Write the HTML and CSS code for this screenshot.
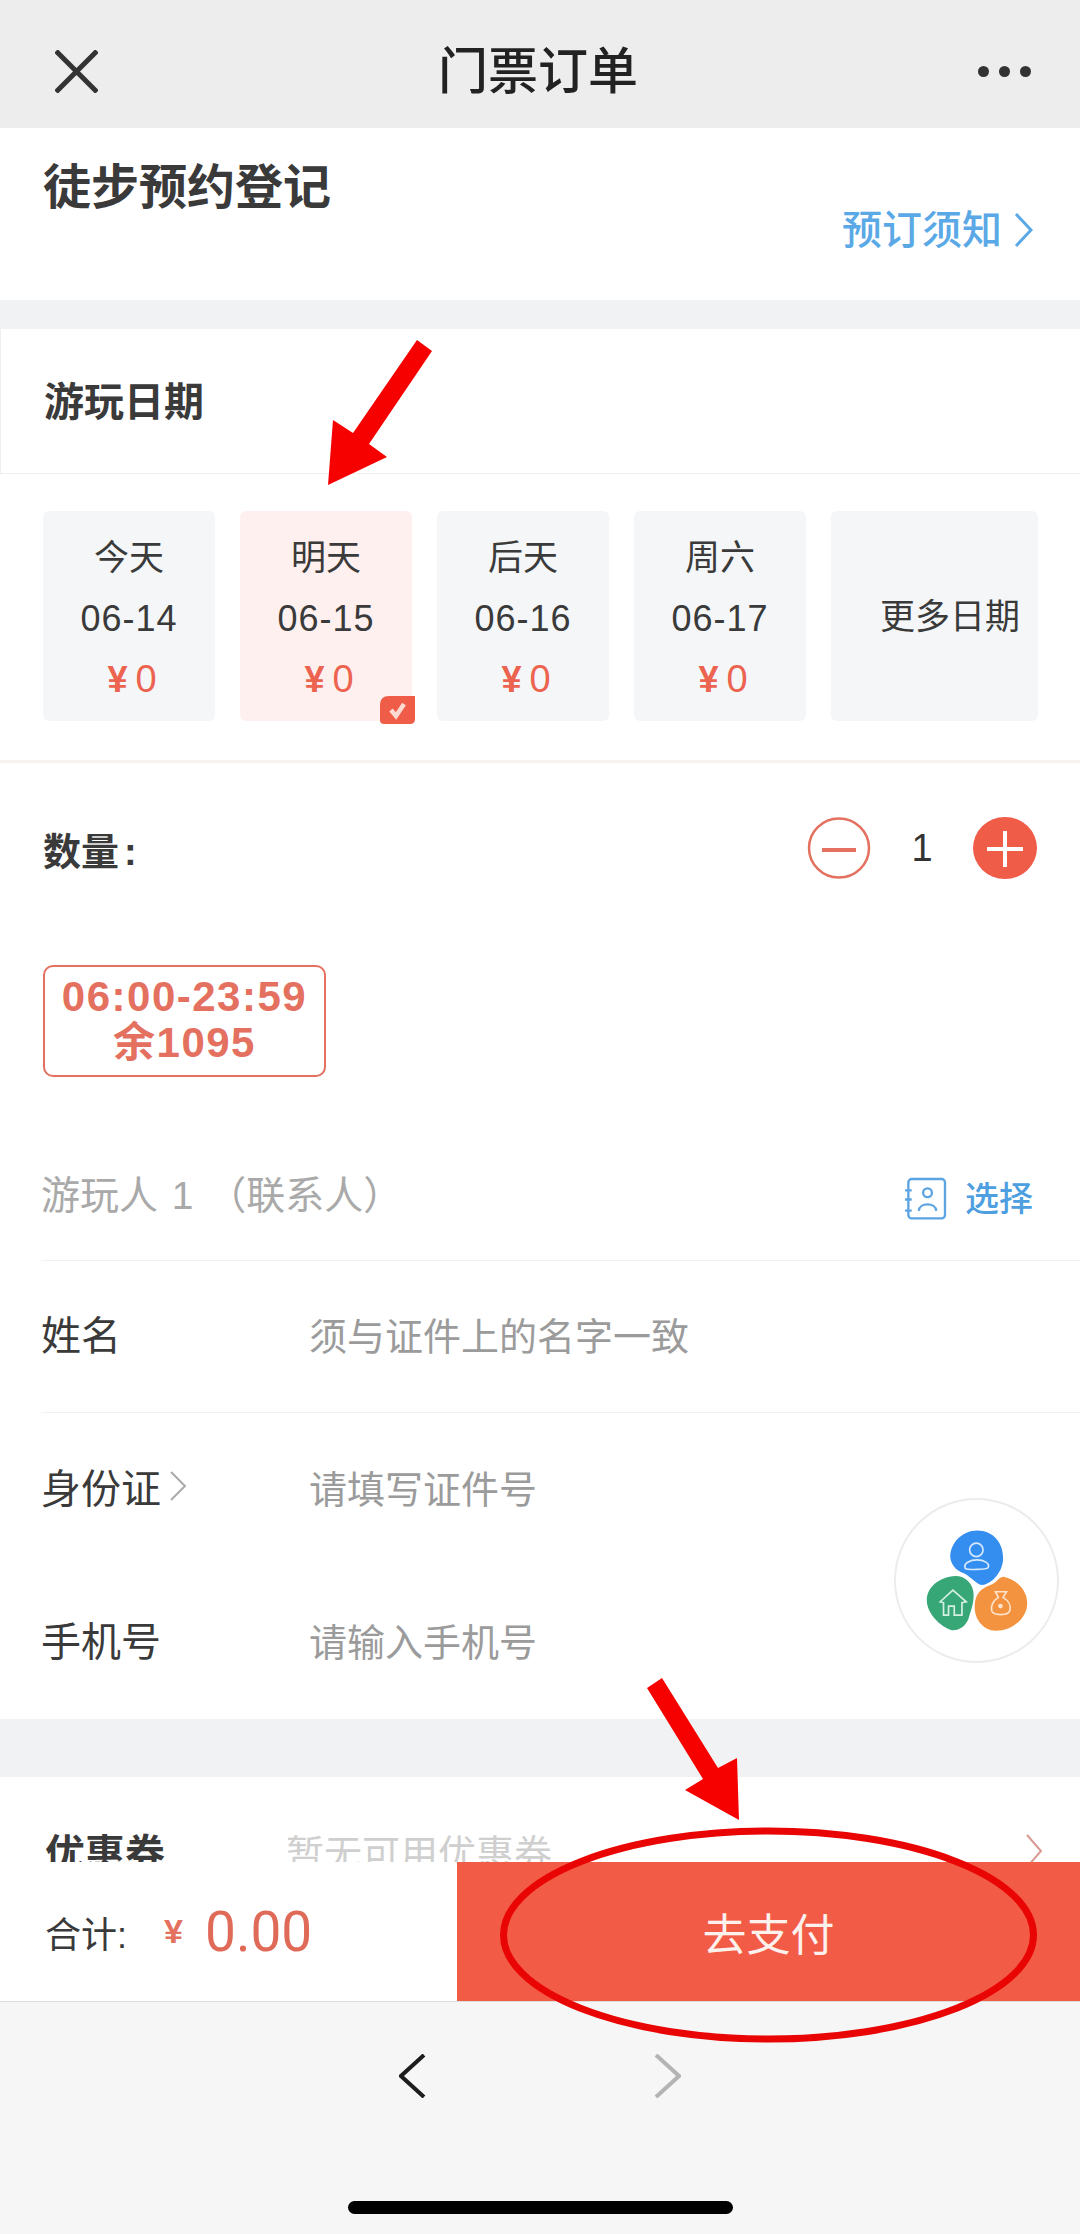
FILE: index.html
```html
<!DOCTYPE html>
<html lang="zh-CN">
<head>
    <meta charset="UTF-8">
    <meta name="viewport" content="width=device-width, initial-scale=1.0">
    <title>门票订单</title>
    <link rel="stylesheet" href="styles.css">
</head>
<body>
    <div class="phone">
        <header class="top-bar">
            <svg class="close-icon" viewBox="0 0 43 43"><path d="M1 1L42 42M42 1L1 42"/></svg>
            <h1 class="top-title">门票订单</h1>
            <div class="more-dots"><i></i><i></i><i></i></div>
        </header>

        <main class="content">
            <section class="ticket-info">
                <h2 class="ticket-name">徒步预约登记</h2>
                <a class="notice-link">预订须知<svg class="chevron" viewBox="0 0 19 34"><path d="M2 1L17 17L2 33"/></svg></a>
            </section>

            <section class="date-section">
                <div class="section-head">游玩日期</div>
                <div class="date-list">
                    <div class="date-card"><span>今天</span><span class="date-day">06-14</span><span class="date-price">¥<b>0</b></span></div>
                    <div class="date-card active">
                        <span>明天</span><span class="date-day">06-15</span><span class="date-price">¥<b>0</b></span>
                        <svg class="check-badge" viewBox="0 0 35 28"><path d="M9 0H35V23Q35 28 30 28H4Q0 28 0 24V9Q0 0 9 0Z" fill="#ef5c47"/><path d="M11 14L16 20L24 8" class="check-mark"/></svg>
                    </div>
                    <div class="date-card"><span>后天</span><span class="date-day">06-16</span><span class="date-price">¥<b>0</b></span></div>
                    <div class="date-card"><span>周六</span><span class="date-day">06-17</span><span class="date-price">¥<b>0</b></span></div>
                    <div class="date-card date-more">更多日期</div>
                </div>
            </section>

            <section class="qty-row">
                <span class="qty-label">数量<span class="qty-colon">:</span></span>
                <div class="stepper">
                    <svg class="step-btn" viewBox="0 0 64 62"><ellipse cx="32" cy="31" rx="30" ry="29.5" fill="#fff" stroke="#e4705f" stroke-width="2.5"/><path d="M15 33H49" stroke="#e4705f" stroke-width="4"/></svg>
                    <span class="qty-value">1</span>
                    <svg class="step-btn" viewBox="0 0 64 62"><ellipse cx="32" cy="31" rx="32" ry="31" fill="#ef5c47"/><path d="M14 32H50M32 14V50" stroke="#fff" stroke-width="4"/></svg>
                </div>
            </section>

            <div class="time-slot">
                <div>06:00-23:59</div>
                <div>余1095</div>
            </div>

            <section class="visitor">
                <div class="visitor-head">
                    <span class="visitor-title">游玩人 1 （联系人）</span>
                    <a class="pick-link">
                        <svg class="pick-icon" viewBox="75 45 128 128"><rect x="88" y="51" width="109" height="117" rx="10"/><path d="M78 85H98M78 112H98M78 145H98"/><circle cx="145" cy="92" r="13"/><path d="M119 146C121 120 169 120 171 146"/></svg>
                        <span class="pick-text">选择</span>
                    </a>
                </div>
                <div class="form-row line">
                    <span class="form-label">姓名</span>
                    <span class="form-hint">须与证件上的名字一致</span>
                </div>
                <div class="form-row">
                    <span class="form-label">身份证<svg class="id-chevron" viewBox="0 0 17 30"><path d="M1 1L15 15L1 29"/></svg></span>
                    <span class="form-hint">请填写证件号</span>
                </div>
                <div class="form-row">
                    <span class="form-label">手机号</span>
                    <span class="form-hint">请输入手机号</span>
                </div>
            </section>

            <section class="coupon-row">
                <span class="coupon-label">优惠券</span>
                <span class="coupon-hint">暂无可用优惠券</span>
                <svg class="coupon-chevron" viewBox="0 0 17 34"><path d="M1 1L15 17L1 33"/></svg>
            </section>
        </main>

        <footer class="pay-bar">
            <div class="pay-total">
                <span class="total-label">合计:</span>
                <span class="total-yen">¥</span>
                <span class="total-num">0.00</span>
            </div>
            <a class="pay-btn">去支付</a>
        </footer>

        <nav class="browser-bar">
            <div class="browser-arrows">
                <svg class="nav-arrow" viewBox="0 0 27 44"><path d="M25 1L2 22L25 43" stroke="#1d1d1d"/></svg>
                <svg class="nav-arrow" viewBox="0 0 27 44"><path d="M2 1L25 22L2 43" stroke="#b4b4b4"/></svg>
            </div>
            <div class="home-bar"></div>
        </nav>

        <!-- 浮动按钮 -->
        <div class="float-btn">
            <svg viewBox="42 55 493 493">
                <path d="M290 152C340 152 368 190 368 235C368 275 335 312 305 315C285 312 270 285 240 275C220 265 210 245 210 228C212 185 250 152 290 152Z" fill="#338ef0"/>
                <circle cx="288" cy="210" r="20" class="blob-line" stroke="#d7e8fd"/>
                <path d="M255 265C248 250 270 240 290 240C310 240 330 250 323 263C318 270 260 270 255 265Z" class="blob-line" stroke="#d7e8fd"/>
                <path d="M225 288C255 288 280 310 280 345C280 375 270 395 265 415C255 440 235 452 215 450C180 440 140 400 140 360C140 320 180 290 225 288Z" fill="#38a778"/>
                <path d="M180 365L218 330L258 365L245 368V405H222V378H205V405H190V368Z" class="blob-line" stroke="#d5f0e3"/>
                <path d="M370 290C410 300 440 330 440 370C440 410 400 452 345 452C310 450 283 420 283 380C283 345 300 325 330 315C350 308 355 290 370 290Z" fill="#f3933f"/>
                <path d="M345 335H378L368 352C385 362 392 378 388 392C384 406 340 408 334 392C330 378 338 362 354 352Z" class="blob-line" stroke="#fde3cb"/>
                <circle cx="360" cy="378" r="7" fill="#fde3cb"/>
            </svg>
        </div>

        <!-- 标注 -->
        <svg class="marks" viewBox="0 0 1080 2234">
            <path d="M417 340L432 351L369 444L387 457L328 485L333 420L353 433Z" fill="#f70000"/>
            <path d="M647 1688L662 1678L718 1768L737 1758L739 1820L685 1790L703 1779Z" fill="#f70000"/>
            <ellipse cx="768.5" cy="1935" rx="265" ry="104" fill="none" stroke="#ea0505" stroke-width="7"/>
        </svg>
    </div>
</body>
</html>
```

FILE: styles.css
```css
* {
    box-sizing: border-box;
}

body {
    margin: 0;
    padding: 0;
    background-color: #fff;
    font-family: "Liberation Sans", "Noto Sans CJK SC", sans-serif;
    color: #3a3a3a;
}

.phone {
    position: relative;
    width: 1080px;
    height: 2234px;
    display: flex;
    flex-direction: column;
    overflow: hidden;
}

svg {
    display: block;
}

/* top bar */
.top-bar {
    height: 128px;
    flex: none;
    padding: 15px 49px 0 55px;
    display: flex;
    align-items: center;
    justify-content: space-between;
    background-color: #ededed;
}

.close-icon {
    width: 43px;
    height: 43px;
    fill: none;
    stroke: #333;
    stroke-width: 5;
}

.top-title {
    margin: 0;
    font-size: 50px;
    font-weight: 500;
    color: #222;
    line-height: 60px;
}

.more-dots {
    display: flex;
    gap: 10px;
}

.more-dots i {
    width: 11px;
    height: 11px;
    border-radius: 50%;
    background-color: #333;
}

/* content */
.content {
    flex: 1;
    min-height: 0;
    overflow: hidden;
    background-color: #fff;
}

.ticket-info {
    height: 172px;
    padding: 36px 47px 0 43px;
    display: flex;
    flex-direction: column;
}

.ticket-name {
    margin: 0;
    font-size: 48px;
    font-weight: 700;
    line-height: 48px;
    color: #3a3a3a;
}

.notice-link {
    align-self: flex-end;
    display: flex;
    align-items: center;
    gap: 12px;
    font-size: 40px;
    font-weight: 500;
    line-height: 36px;
    color: #5aa9e6;
}

.chevron {
    width: 19px;
    height: 34px;
    fill: none;
    stroke: #5aa9e6;
    stroke-width: 3;
}

.date-section {
    border-top: 29px solid #f1f2f4;
}

.section-head {
    height: 145px;
    padding: 0 0 5px 43px;
    display: flex;
    align-items: center;
    font-size: 40px;
    font-weight: 700;
    border-left: 1px solid #eee;
    border-bottom: 1px solid #eee;
}

.date-list {
    display: flex;
    gap: 25px;
    height: 289px;
    padding: 37px 0 0 43px;
    border-bottom: 3px solid #f6f3ee;
}

.date-card {
    position: relative;
    width: 172px;
    height: 210px;
    padding-top: 16px;
    display: flex;
    flex-direction: column;
    align-items: center;
    border-radius: 6px;
    background-color: #f4f6f8;
    font-size: 35px;
    line-height: 61px;
}

.date-card.active {
    background-color: #fef0ee;
}

.date-day {
    font-size: 36px;
    letter-spacing: 1px;
}

.date-price {
    font-size: 36px;
    font-weight: 700;
    color: #ec6350;
    letter-spacing: 8px;
    margin-left: 6px;
}

.date-price b {
    font-weight: 400;
    font-size: 38px;
    letter-spacing: 0;
}

.date-more {
    width: 207px;
    padding: 0 0 0 49px;
    align-items: flex-start;
    justify-content: center;
}

.check-badge {
    position: absolute;
    right: -3px;
    bottom: -3px;
    width: 35px;
    height: 28px;
}

.check-mark {
    fill: none;
    stroke: #fcd9d2;
    stroke-width: 4.5;
}

.qty-row {
    height: 170px;
    padding: 0 43px;
    display: flex;
    align-items: center;
    justify-content: space-between;
}

.qty-label {
    font-size: 38px;
    font-weight: 700;
}

.qty-colon {
    margin-left: 5px;
}

.stepper {
    display: flex;
    align-items: center;
}

.step-btn {
    width: 64px;
    height: 62px;
}

.qty-value {
    width: 102px;
    text-align: center;
    font-size: 38px;
    font-weight: 500;
    color: #333;
}

.time-slot {
    width: 283px;
    height: 112px;
    margin: 32px 0 0 43px;
    padding-top: 7px;
    border: 2.5px solid #e4705f;
    border-radius: 10px;
    text-align: center;
    font-size: 42px;
    font-weight: 700;
    line-height: 46px;
    letter-spacing: 1.5px;
    color: #e4705f;
}

.visitor-head {
    height: 183px;
    padding: 95px 47px 0 41px;
    display: flex;
    justify-content: space-between;
    align-items: flex-start;
}

.visitor-title {
    font-size: 39px;
    line-height: 48px;
    word-spacing: 3px;
    color: #a9a9a9;
}

.pick-link {
    display: flex;
    align-items: center;
    gap: 18px;
    margin-top: 1px;
    font-size: 34px;
    font-weight: 500;
    color: #4e9fe0;
}

.pick-text {
    line-height: 48px;
    margin-top: 2px;
}

.pick-icon {
    width: 43px;
    height: 43px;
    fill: none;
    stroke: #5da4e3;
    stroke-width: 7;
}

.form-row {
    height: 153px;
    margin-left: 41px;
    padding-bottom: 7px;
    display: flex;
    align-items: center;
    font-size: 38px;
}

.form-row.line {
    border-top: 1px solid #f1f1f1;
    border-bottom: 1px solid #f1f1f1;
}

.form-label {
    width: 268px;
    display: flex;
    align-items: center;
    gap: 9px;
    font-size: 40px;
}

.id-chevron {
    width: 17px;
    height: 30px;
    fill: none;
    stroke: #aaa;
    stroke-width: 2;
}

.form-hint {
    color: #9b9b9b;
}

.coupon-row {
    height: 200px;
    padding: 49px 37px 0 45px;
    display: flex;
    align-items: flex-start;
    border-top: 58px solid #f1f2f4;
    font-size: 38px;
}

.coupon-label {
    width: 241px;
    font-weight: 700;
    font-size: 40px;
    line-height: 56px;
}

.coupon-hint {
    line-height: 56px;
    color: #cfcfcf;
}

.coupon-chevron {
    margin: 8px 0 0 auto;
    width: 17px;
    height: 34px;
    fill: none;
    stroke: #d89a92;
    stroke-width: 2;
}

/* pay bar */
.pay-bar {
    height: 140px;
    flex: none;
    display: flex;
    background-color: #fff;
    border-bottom: 1px solid #ddd;
}

.pay-total {
    width: 457px;
    padding-left: 45px;
    display: flex;
    align-items: center;
}

.total-label {
    font-size: 36px;
    width: 119px;
}

.total-yen {
    font-size: 34px;
    font-weight: 700;
    width: 41px;
    color: #e4705f;
}

.total-num {
    font-family: Roboto, "Liberation Sans", sans-serif;
    font-size: 55px;
    font-weight: 400;
    color: #e06a58;
}

.pay-btn {
    flex: 1;
    display: flex;
    align-items: center;
    justify-content: center;
    background-color: #f25c47;
    font-size: 44px;
    color: #fdf1ee;
}

/* browser bar */
.browser-bar {
    height: 232px;
    flex: none;
    display: flex;
    flex-direction: column;
    align-items: center;
    background-color: #f6f6f6;
}

.browser-arrows {
    margin-top: 52px;
    display: flex;
    gap: 228px;
}

.nav-arrow {
    width: 27px;
    height: 44px;
    fill: none;
    stroke-width: 4;
}

.home-bar {
    width: 385px;
    height: 13px;
    margin-top: 103px;
    border-radius: 7px;
    background-color: #000;
}

/* overlays */
.float-btn {
    position: absolute;
    left: 894px;
    top: 1498px;
    width: 165px;
    height: 165px;
    border: 2px solid #ececec;
    border-radius: 50%;
    background-color: #fff;
}

.float-btn svg {
    position: absolute;
    left: -2px;
    top: -2px;
    width: 165px;
    height: 165px;
}

.blob-line {
    fill: none;
    stroke-width: 5;
}

.marks {
    position: absolute;
    left: 0;
    top: 0;
    width: 1080px;
    height: 2234px;
    pointer-events: none;
}
```
